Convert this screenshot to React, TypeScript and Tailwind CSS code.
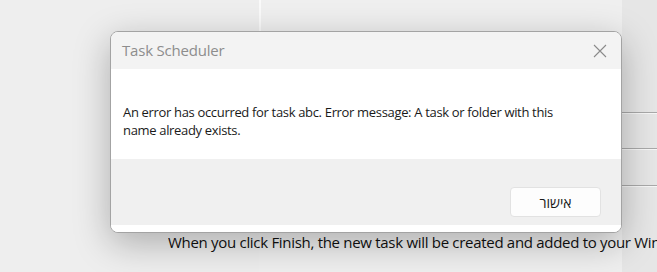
import React from "react";

export default function App() {
  return (
    <div
      className="relative w-[657px] h-[272px] overflow-hidden bg-[#efefef]"
      style={{ fontFamily: '"Open Sans", "Noto Sans", sans-serif' }}
    >
      {/* background wizard window */}
      <div className="flex h-full">
        <div className="w-[259px] h-full bg-[#eeeeee]" />
        <div className="flex flex-col flex-1">
          <div className="flex flex-1">
            <div className="w-[2px] h-[31px] bg-[#fafafa]" />
            <div className="flex-1" />
            <div className="w-[35px] flex flex-col bg-[#e6e6e6]">
              <div className="h-[112px]" />
              <div className="h-px bg-[#a9a9a9]" />
              <div className="h-px bg-[#f7f7f7]" />
              <div className="h-[34px]" />
              <div className="h-px bg-[#a9a9a9]" />
              <div className="h-px bg-[#f7f7f7]" />
              <div className="h-[35px]" />
              <div className="h-px bg-[#a9a9a9]" />
              <div className="h-px bg-[#f7f7f7]" />
            </div>
          </div>
        </div>
      </div>
      <div className="absolute left-[168px] top-[231px] w-[489px] overflow-hidden whitespace-nowrap text-[15px] text-[#111] tracking-[-0.3px]">
        When you click Finish, the new task will be created and added to your Win
      </div>

      {/* dialog */}
      <div className="absolute left-[110px] top-[31px] w-[512px] h-[202px] rounded-[8px] border border-[#a3a3a3] bg-white overflow-hidden flex flex-col shadow-[0_10px_36px_rgba(0,0,0,0.28)]">
        <div className="h-[37px] bg-[#f3f3f3] flex items-center justify-between pl-[11px] pr-[13px]">
          <span className="text-[15px] text-[#8d8d8d] tracking-[-0.2px]">Task Scheduler</span>
          <svg width="14" height="14" viewBox="0 0 14 14" className="mr-[1px]">
            <path d="M1 1 L13 13 M13 1 L1 13" stroke="#8a8a8a" strokeWidth="1.1" fill="none" />
          </svg>
        </div>
        <div className="h-[90px] bg-white pl-[12px] pt-[34px] text-[13px] leading-[18px] text-[#1a1a1a] tracking-[-0.33px]">
          <p>An error has occurred for task abc. Error message: A task or folder with this</p>
          <p>name already exists.</p>
        </div>
        <div className="h-[66px] bg-[#f0f0f0] flex justify-end items-end pb-[8px] pr-[20px]">
          <button className="w-[91px] h-[30px] rounded-[4px] border border-[#e2e2e2] bg-[#fdfdfd] text-[14px] text-[#1a1a1a]">
            אישור
          </button>
        </div>
        <div className="flex-1 bg-white" />
      </div>
    </div>
  );
}
